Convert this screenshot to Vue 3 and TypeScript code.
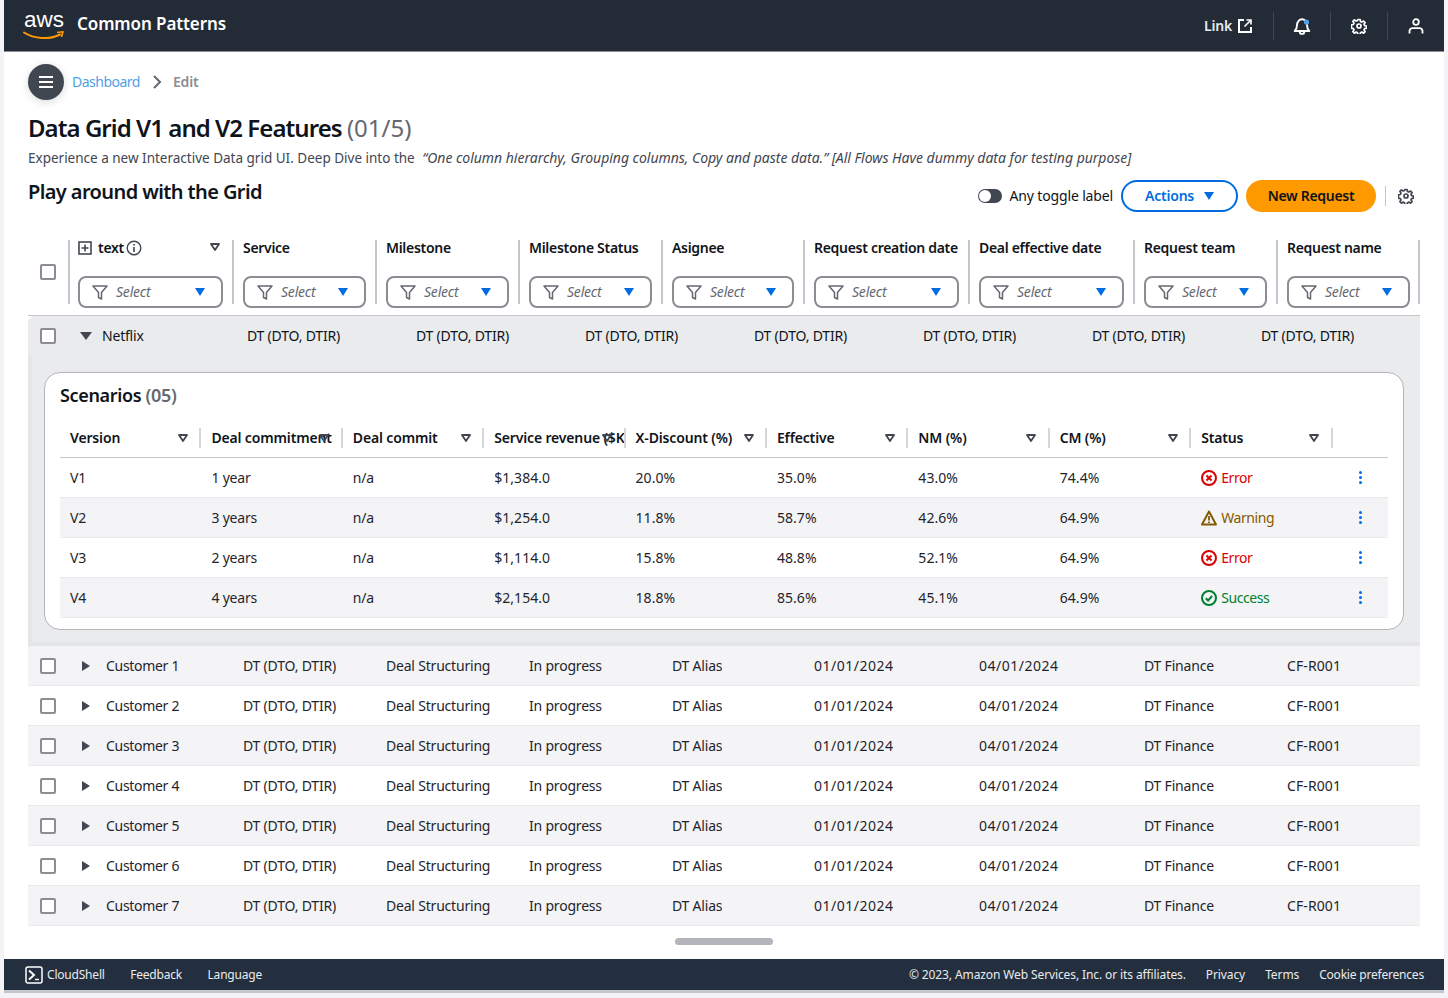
<script setup lang="ts">
const columns = ['Service', 'Milestone', 'Milestone Status', 'Asignee', 'Request creation date', 'Deal effective date', 'Request team', 'Request name']
const customers = [1, 2, 3, 4, 5, 6, 7].map((n) => `Customer ${n}`)
const rowValues = ['DT (DTO, DTIR)', 'Deal Structuring', 'In progress', 'DT Alias', '01/01/2024', '04/01/2024', 'DT Finance', 'CF-R001']
const netflixValues = Array.from({ length: 7 }, () => 'DT (DTO, DTIR)')
const subColumns = ['Version', 'Deal commitment', 'Deal commit', 'Service revenue ($K)', 'X-Discount (%)', 'Effective', 'NM (%)', 'CM (%)', 'Status']
type Kind = 'error' | 'warning' | 'success'
const scenarios: { cells: string[]; status: string; kind: Kind }[] = [
  { cells: ['V1', '1 year', 'n/a', '$1,384.0', '20.0%', '35.0%', '43.0%', '74.4%'], status: 'Error', kind: 'error' },
  { cells: ['V2', '3 years', 'n/a', '$1,254.0', '11.8%', '58.7%', '42.6%', '64.9%'], status: 'Warning', kind: 'warning' },
  { cells: ['V3', '2 years', 'n/a', '$1,114.0', '15.8%', '48.8%', '52.1%', '64.9%'], status: 'Error', kind: 'error' },
  { cells: ['V4', '4 years', 'n/a', '$2,154.0', '18.8%', '85.6%', '45.1%', '64.9%'], status: 'Success', kind: 'success' },
]
const gear = 'M6.9 1.5h2.2l.4 2 1.3.6 1.8-1.1 1.5 1.5-1.1 1.8.6 1.3 2 .4v2.2l-2 .4-.6 1.3 1.1 1.8-1.5 1.5-1.8-1.1-1.3.6-.4 2H6.9l-.4-2-1.3-.6-1.8 1.1-1.5-1.5 1.1-1.8-.6-1.3-2-.4V6.9l2-.4.6-1.3-1.1-1.8 1.5-1.5 1.8 1.1 1.3-.6z'
</script>

<template>
  <div class="page">
    <header class="topbar">
      <div class="brand">
        <div class="logo">
          <span class="logo-text">aws</span>
          <svg class="smile" viewBox="0 0 42 10" width="42" height="10">
            <path d="M1 1.5C11 8 27 9 37 3.5" fill="none" stroke="#ff9900" stroke-width="2" stroke-linecap="round" />
            <path d="M34 1.5l6-.7-1.5 5.2" fill="none" stroke="#ff9900" stroke-width="1.6" stroke-linejoin="round" />
          </svg>
        </div>
        <span class="brand-name">Common Patterns</span>
      </div>
      <div class="top-actions">
        <div class="top-link">
          <span>Link</span>
          <svg viewBox="0 0 16 16" width="16" height="16" fill="none" stroke="#fff" stroke-width="2">
            <path d="M7 2H2v12h12V9" />
            <path d="M9.5 2H14v4.5M14 2L7.5 8.5" stroke-width="1.6" />
          </svg>
        </div>
        <div class="top-icon">
          <svg viewBox="0 0 16 16" width="18" height="18" fill="none" stroke="#fff" stroke-width="1.7" stroke-linejoin="round">
            <path d="M1.5 12.5h13c-1.5-1.2-2-2.5-2-5C12.500 4.500 10.500 2 8 2S3.500 4.500 3.500 7.500c0 2.500-.5 3.800-2 5z" />
            <path d="M6 13c0 1.500 1 2 2 2s2-.5 2-2" />
            <circle cx="12" cy="4.500" r="2.300" fill="#539fe5" stroke="none" />
          </svg>
        </div>
        <div class="top-icon">
          <svg viewBox="0 0 16 16" width="16" height="16" fill="none" stroke="#fff" stroke-width="1.7" stroke-linejoin="round">
            <path :d="gear" />
            <circle cx="8" cy="8" r="2" />
          </svg>
        </div>
        <div class="top-icon">
          <svg viewBox="0 0 16 16" width="16" height="16" fill="none" stroke="#fff" stroke-width="1.8">
            <circle cx="8" cy="4" r="2.800" />
            <path d="M1.500 15.500V13c0-1.500 1.500-2.800 3-2.800h7c1.500 0 3 1.300 3 2.800v2.500" />
          </svg>
        </div>
      </div>
    </header>

    <main class="content">
      <nav class="crumbs">
        <button class="menu-btn" aria-label="Menu">
          <span></span><span></span><span></span>
        </button>
        <a class="crumb-link">Dashboard</a>
        <svg viewBox="0 0 10 16" width="10" height="16" fill="none" stroke="#656871" stroke-width="2"><path d="M2 2l6 6-6 6" /></svg>
        <span class="crumb-current">Edit</span>
      </nav>

      <h1 class="title">Data Grid V1 and V2 Features <span class="count">(01/5)</span></h1>
      <p class="desc">Experience a new Interactive Data grid UI. Deep Dive into the <em>“One column hierarchy, Grouping columns, Copy and paste data.” [All Flows Have dummy data for testing purpose]</em></p>

      <div class="section-head">
        <h2 class="subtitle">Play around with the Grid</h2>
        <div class="tools">
          <span class="toggle"><i></i></span>
          <span class="toggle-label">Any toggle label</span>
          <button class="btn-actions"><span>Actions</span> <b class="tri"></b></button>
          <button class="btn-primary"><span>New Request</span></button>
          <span class="tool-sep"></span>
          <svg viewBox="0 0 16 16" width="16" height="16" fill="none" stroke="#424650" stroke-width="1.7" stroke-linejoin="round">
            <path :d="gear" />
            <circle cx="8" cy="8" r="2" />
          </svg>
        </div>
      </div>

      <div class="grid">
        <div class="grid-row head-row">
          <div class="check-cell"><span class="check"></span></div>
          <div class="head-cell first">
            <div class="head-label">
              <svg viewBox="0 0 14 14" width="14" height="14" fill="none" stroke="#424650" stroke-width="1.600"><rect x="1" y="1" width="12" height="12" /><path d="M7 3.500v7M3.500 7h7" /></svg>
              <span>text</span>
              <svg class="info" viewBox="0 0 16 16" width="16" height="16" fill="none" stroke="#424650" stroke-width="1.400"><circle cx="8" cy="8" r="6.800" /><path d="M8 7v5M8 4v1.600" stroke-width="1.600" /></svg>
              <svg class="sort" viewBox="0 0 10 8" width="10" height="8" fill="none" stroke="#424650" stroke-width="1.800" stroke-linejoin="round"><path d="M1 1h8L5 7z" /></svg>
            </div>
            <div class="select">
              <svg viewBox="0 0 16 16" width="16" height="16" fill="none" stroke="#656871" stroke-width="1.500" stroke-linejoin="round"><path d="M1 2h14L9.500 8.500V15l-3-1.500v-5z" /></svg>
              <em>Select</em><b class="tri"></b>
            </div>
          </div>
          <div v-for="c in columns" :key="c" class="head-cell">
            <div class="head-label"><span>{{ c }}</span></div>
            <div class="select">
              <svg viewBox="0 0 16 16" width="16" height="16" fill="none" stroke="#656871" stroke-width="1.500" stroke-linejoin="round"><path d="M1 2h14L9.500 8.500V15l-3-1.500v-5z" /></svg>
              <em>Select</em><b class="tri"></b>
            </div>
          </div>
        </div>

        <div class="expanded">
          <div class="netflix-row">
            <div class="check-cell"><span class="check"></span></div>
            <span class="caret-down"></span>
            <span class="netflix-name">Netflix</span>
            <div class="netflix-values">
              <span v-for="(v, i) in netflixValues" :key="i">{{ v }}</span>
            </div>
          </div>
          <section class="card">
            <h3 class="card-title">Scenarios <span>(05)</span></h3>
            <div class="sub-row sub-head">
              <div v-for="c in subColumns" :key="c" class="sub-head-cell">
                <span>{{ c }}</span>
                <svg class="sub-sort" viewBox="0 0 10 8" width="10" height="8" fill="none" stroke="#424650" stroke-width="1.800" stroke-linejoin="round"><path d="M1 1h8L5 7z" /></svg>
              </div>
              <div></div>
            </div>
            <div v-for="s in scenarios" :key="s.cells[0]" class="sub-row sub-body">
              <div v-for="(c, i) in s.cells" :key="i" class="sub-cell" :class="{ figure: i > 2 }">{{ c }}</div>
              <div class="sub-cell status" :class="s.kind">
                <svg v-if="s.kind === 'error'" viewBox="0 0 16 16" width="16" height="16" fill="none" stroke="currentColor" stroke-width="2"><circle cx="8" cy="8" r="7" /><path d="M5.500 5.500l5 5M10.500 5.500l-5 5" /></svg>
                <svg v-else-if="s.kind === 'warning'" viewBox="0 0 16 16" width="16" height="16" fill="none" stroke="currentColor" stroke-width="2" stroke-linejoin="round"><path d="M8 1.500L1 14.500h14z" /><path d="M8 6v4.500M8 11.500v1.500" stroke-width="1.800" /></svg>
                <svg v-else viewBox="0 0 16 16" width="16" height="16" fill="none" stroke="currentColor" stroke-width="2"><circle cx="8" cy="8" r="7" /><path d="M4.800 8.200l2.300 2.300 4-4.500" /></svg>
                <span>{{ s.status }}</span>
              </div>
              <div class="kebab"><i></i><i></i><i></i></div>
            </div>
          </section>
        </div>

        <div v-for="name in customers" :key="name" class="grid-row body-row">
          <div class="check-cell"><span class="check"></span></div>
          <div class="name-cell"><span class="caret-right"></span><span>{{ name }}</span></div>
          <div v-for="(v, i) in rowValues" :key="i" class="body-cell" :class="{ date: i === 4 || i === 5, code: i === 7 }">{{ v }}</div>
        </div>
      </div>

      <div class="scroll-track"><span class="thumb"></span></div>
    </main>

    <footer class="footer">
      <div class="foot-left">
        <span class="shell">
          <svg viewBox="0 0 18 18" width="18" height="18" fill="none" stroke="#fff"><rect x="1" y="1" width="16" height="16" rx="2" stroke-width="1.500" /><path d="M4 4.500L9 9l-5 4.500" stroke-width="2" /><path d="M10 13.500h4" stroke-width="1.500" /></svg>
          CloudShell
        </span>
        <span>Feedback</span>
        <span>Language</span>
      </div>
      <div class="foot-right">
        <span class="copyright">© 2023, Amazon Web Services, Inc. or its affiliates.</span>
        <span>Privacy</span>
        <span>Terms</span>
        <span class="cookie">Cookie preferences</span>
      </div>
    </footer>
  </div>
</template>

<style scoped>
.page {
  width: 1440px;
  height: 990px;
  margin-left: 4px;
  background: #fff;
  display: flex;
  flex-direction: column;
  color: #0f141a;
  font-family: "Noto Sans", "Open Sans", sans-serif;
  font-size: 14px;
  letter-spacing: -0.2px;
  overflow: hidden;
}
.topbar {
  height: 52px;
  box-sizing: border-box;
  flex: none;
  background: #232b37;
  border-bottom: 1px solid #8c8c94;
  display: flex;
  align-items: center;
  justify-content: space-between;
  padding: 0 0 0 20px;
}
.brand { display: flex; align-items: center; gap: 15px; margin-top: -4px; }
.logo { width: 38px; height: 40px; position: relative; }
.logo-text {
  position: absolute; left: 0; top: 3px;
  color: #fff; font-size: 22.5px; line-height: 26px; letter-spacing: 0;
  font-family: "Liberation Sans", sans-serif;
}
.smile { position: absolute; left: -1px; top: 27px; }
.brand-name { color: #fff; font-size: 17px; font-weight: 600; letter-spacing: -0.1px; }
.top-actions { display: flex; align-items: center; height: 28px; }
.top-link { display: flex; align-items: center; gap: 5px; color: #e9ebed; font-weight: 600; padding-right: 20px; border-right: 1px solid #424650; height: 28px; }
.top-icon { width: 56px; height: 28px; display: flex; align-items: center; justify-content: center; border-right: 1px solid #424650; box-sizing: content-box; }
.top-icon:last-child { border-right: 0; }
.content { flex: 1; padding: 0 24px; min-height: 0; }
.crumbs { display: flex; align-items: center; height: 36px; margin-top: 12px; color: #8c8c94; }
.menu-btn {
  width: 36px; height: 36px; border: 0; border-radius: 50%;
  background: #414750; padding: 0; margin-right: 8px;
  display: flex; flex-direction: column; align-items: center; justify-content: center; gap: 3px;
  box-shadow: 0 2px 8px rgba(15, 20, 26, 0.15);
}
.menu-btn span { width: 14px; height: 2px; background: #fff; display: block; }
.crumb-link { color: #539fe5; margin-right: 12px; letter-spacing: -0.5px; padding-bottom: 2px; }
.crumb-current { font-weight: 600; margin-left: 11px; padding-bottom: 2px; }
.title { margin: 12px 0 0; font-size: 24px; line-height: 32px; font-weight: 600; letter-spacing: -0.95px; }
.count { font-weight: 400; color: #656871; letter-spacing: 0; }
.desc { margin: 4px 0 0; font-size: 13.5px; line-height: 20px; color: #424650; white-space: nowrap; letter-spacing: 0; }
.desc em { margin-left: 4px; font-size: 14px; letter-spacing: -0.02px; }
.section-head { display: flex; justify-content: space-between; align-items: flex-start; margin-top: 6px; height: 57px; }
.subtitle { margin: 5px 0 0; font-size: 20px; line-height: 26px; font-weight: 600; letter-spacing: -0.6px; }
.tools { display: flex; align-items: center; height: 32px; margin-top: 6px; padding-right: 6px; }
.toggle { width: 24px; height: 14px; border-radius: 7px; background: #414750; position: relative; margin-right: 8px; flex: none; }
.toggle i { position: absolute; left: 1px; top: 1px; width: 12px; height: 12px; border-radius: 50%; background: #fff; }
.toggle-label { color: #0f141a; margin-right: 8px; padding-bottom: 2px; letter-spacing: -0.15px; }
.btn-actions {
  width: 117px; height: 32px; box-sizing: border-box; border: 2px solid #006ce0; border-radius: 16px;
  background: #fff; color: #006ce0; font: 600 14px "Noto Sans", sans-serif; letter-spacing: -0.2px;
  display: flex; align-items: center; justify-content: center; gap: 10px; margin-right: 8px; padding: 0;
}
.btn-actions span, .btn-primary span { display: block; padding-bottom: 2px; }
.btn-primary {
  width: 130px; height: 32px; border: 0; border-radius: 16px; padding: 0;
  background: #ff9900; color: #0f141a; font: 600 14px "Noto Sans", sans-serif; letter-spacing: -0.3px;
}
.tool-sep { width: 1px; height: 20px; background: #c6c6cd; margin: 0 12px 0 9px; }
.tri { width: 0; height: 0; border-left: 5.5px solid transparent; border-right: 5.5px solid transparent; border-top: 8px solid #006ce0; display: block; }

.grid { width: 1392px; }
.grid-row { display: grid; grid-template-columns: 40px 164px 143px 143px 143px 142px 165px 165px 143px 144px; }
.head-row { border-bottom: 1px solid #c6c6cd; box-sizing: content-box; height: 83px; padding-top: 1px; }
.check-cell { display: flex; align-items: center; justify-content: center; flex: none; }
.head-row .check-cell { padding-bottom: 4px; }
.check { width: 16px; height: 16px; box-sizing: border-box; border: 2px solid #8c8c94; border-radius: 2px; background: #fff; display: block; }
.head-cell { position: relative; padding: 0 9px; border-left: 2px solid #c6c6cd; margin: 8px 0 12px; height: 64px; box-sizing: border-box; }
.head-cell:last-child { border-right: 2px solid #c6c6cd; }
.head-cell.first { padding-left: 8px; }
.head-label { display: flex; align-items: center; gap: 6px; height: 17px; margin-top: -1px; font-size: 14px; font-weight: 600; letter-spacing: -0.3px; white-space: nowrap; position: relative; color: #0f141a; }
.info { margin-left: -4px; }
.sort { position: absolute; right: 3px; top: 4px; }
.select {
  position: absolute; left: 9px; right: 9px; top: 36px; height: 32px; box-sizing: border-box;
  border: 2px solid #8c8c94; border-radius: 8px; background: #fff;
  display: flex; align-items: center; padding: 0 16px 0 12px; gap: 8px; color: #656871;
}
.head-cell.first .select { left: 8px; }
.head-cell:last-child .select { right: 8px; }
.select em { flex: 1; font-size: 14px; padding-bottom: 2px; }
.expanded {
  height: 330px; border-top-left-radius: 8px; border-bottom: 4px solid #e4e5e8; box-sizing: border-box;
  display: flex; flex-direction: column;
  background: linear-gradient(to right, #e4e5e8 4px, #e9ebed 4px);
}
.netflix-row { height: 40px; flex: none; display: flex; align-items: center; background: #e9ebed; border-top-left-radius: 8px; }
.netflix-row .check-cell { width: 40px; }
.caret-down { width: 0; height: 0; border-left: 6px solid transparent; border-right: 6px solid transparent; border-top: 8px solid #424650; margin-left: 12px; flex: none; }
.netflix-name { width: 145px; margin-left: 10px; padding-bottom: 2px; flex: none; }
.netflix-values { flex: 1; min-width: 0; display: grid; grid-template-columns: repeat(6, 169px) 1fr; padding-bottom: 2px; }
.netflix-values span { white-space: nowrap; }
.card {
  margin: 16px 16px 0 16px; height: 258px; box-sizing: border-box; flex: none;
  background: #fff; border: 1px solid #b4b4bb; border-radius: 16px; padding: 0 15px;
}
.card-title { margin: 11px 0 0; font-size: 18px; line-height: 22px; font-weight: 600; letter-spacing: -0.35px; height: 22px; }
.card-title span { color: #656871; }
.sub-row { display: grid; grid-template-columns: repeat(9, 141.4px) 1fr; }
.sub-head { height: 38px; margin-top: 14px; border-bottom: 1px solid #c6c6cd; align-items: start; box-sizing: border-box; }
.sub-head-cell { position: relative; height: 20px; margin-top: 8px; overflow: hidden; padding-left: 10px; border-right: 2px solid #d5d5da; font-weight: 600; font-size: 14px; line-height: 20px; white-space: nowrap; box-sizing: border-box; letter-spacing: -0.15px; }
.sub-sort { position: absolute; left: 118px; top: 6px; }
.sub-body { height: 40px; border-bottom: 1px solid #e9ebed; box-sizing: border-box; align-items: center; }
.sub-body:nth-of-type(odd) { background: #f4f4f6; }
.sub-cell { padding-left: 10px; white-space: nowrap; color: #1f242b; }
.sub-cell.figure { letter-spacing: 0.05px; }
.status { display: flex; align-items: center; gap: 4px; letter-spacing: -0.4px; }
.status.error { color: #db0000; }
.status.warning { color: #855900; }
.status.success { color: #00802f; }
.kebab { display: flex; flex-direction: column; align-items: center; gap: 2px; padding-left: 0; }
.kebab i { width: 3px; height: 3px; border-radius: 50%; background: #006ce0; display: block; }
.body-row { height: 40px; box-sizing: border-box; border-bottom: 1px solid #e9ebed; align-items: center; }
.body-row:nth-child(odd) { background: #f4f4f6; }
.name-cell { display: flex; align-items: center; gap: 16px; padding-left: 14px; white-space: nowrap; color: #1f242b; letter-spacing: -0.3px; }
.caret-right { width: 0; height: 0; border-top: 5px solid transparent; border-bottom: 5px solid transparent; border-left: 8px solid #424650; display: block; }
.body-cell { padding-left: 11px; white-space: nowrap; color: #1f242b; }
.body-cell.date { letter-spacing: 0.5px; }
.body-cell.code { letter-spacing: 0.1px; }
.scroll-track { height: 33px; display: flex; justify-content: center; align-items: flex-start; padding-top: 12px; box-sizing: border-box; }
.thumb { width: 98px; height: 7px; border-radius: 4px; background: #b4b4bb; display: block; }
.footer {
  height: 31px; flex: none; background: #232f3e; color: #e9ebed; font-size: 12px; letter-spacing: -0.1px;
  display: flex; justify-content: space-between; align-items: center; padding: 0 20px 0 21px;
}
.foot-left, .foot-right { display: flex; align-items: center; }
.foot-left { gap: 25.500px; letter-spacing: -0.2px; }
.foot-right { gap: 20px; }
.copyright { letter-spacing: -0.11px; }
.cookie { letter-spacing: -0.2px; }
.shell { display: flex; align-items: center; gap: 4px; }
</style>

<style>
html, body { margin: 0; background: #f4f4f6; }
body::after { content: ""; position: fixed; left: 4px; right: 4px; top: 990px; height: 3px; background: #c6c6cd; }
</style>
